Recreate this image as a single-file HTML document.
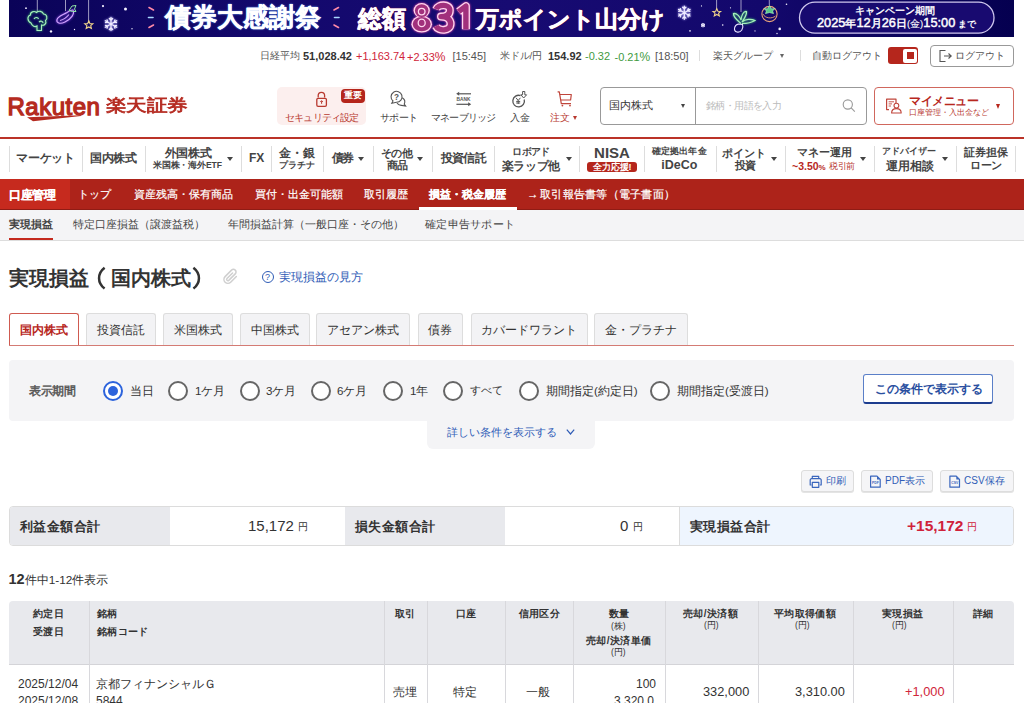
<!DOCTYPE html>
<html lang="ja"><head><meta charset="utf-8">
<style>
*{box-sizing:border-box;margin:0;padding:0}
html,body{width:1024px;height:703px;overflow:hidden;background:#fff}
body{position:relative;font-family:"Liberation Sans",sans-serif;color:#333}
.a{position:absolute}
.t{position:absolute;white-space:nowrap;line-height:1}
.b{font-weight:bold}
.g{color:#555}
.red{color:#d0263a}
.grn{color:#3f9b3f}
.blue{color:#2f5cb6}
.div{position:absolute;width:1px;background:#ddd}
.tri{position:absolute;width:0;height:0;border-left:2.75px solid transparent;border-right:2.75px solid transparent;border-top:4px solid #444}
</style></head><body>

<!-- ============ BANNER ============ -->
<div class="a" id="banner" style="left:9px;top:0;width:1005px;height:37px;background:linear-gradient(90deg,#0a0358 0%,#13086c 25%,#170b72 50%,#13086c 75%,#050050 100%);overflow:hidden">
<svg class="a" style="left:-9px;top:0" width="1024" height="37" viewBox="0 0 1024 37">
 <g stroke="#d8d4e8" stroke-width="0.8" opacity="0.9">
  <line x1="37.3" y1="0" x2="37.3" y2="12"/>
  <line x1="65.5" y1="0" x2="65.5" y2="11"/>
  <line x1="88.6" y1="0" x2="88.6" y2="21"/>
  <line x1="716.6" y1="0" x2="716.6" y2="9"/>
  <line x1="741" y1="0" x2="741" y2="12"/>
  <line x1="769.3" y1="0" x2="769.3" y2="5"/>
 </g>
 <!-- broccoli -->
 <g fill="none" stroke="#a6f0bb" stroke-width="1.1" style="filter:drop-shadow(0 0 1px #3fd070)">
  <path d="M31 23 C27 21 27 16 30.5 15 C30 12 34 10.5 36.5 12.5 C38.5 10.5 42.5 11 43.5 14 C47 14 48 18.5 45.5 20.5 C47 23.5 44 26 41.5 25 L41.5 30.5 L37 30.5 L37 26 C35 27.5 32 26 31 23 Z"/>
  <path d="M34 19 C35 17 38 17 38.5 19 M39 22 C40.5 20.5 43 21 43 23"/>
 </g>
 <!-- eggplant -->
 <g fill="none" stroke="#d2a6ff" stroke-width="1.1" style="filter:drop-shadow(0 0 1px #a050ff)">
  <path d="M73 10 C75 14 71 19 65 22 C60 24.5 56 23 57 19.5 C58 16 63 15 67 12.5 C69 11 71 9.5 73 10 Z"/>
  <path d="M60 20.5 C64 19.5 67 17 69 14.5"/>
 </g>
 <path d="M69 10.5 L72 6 L76 5.5 L74.5 9 L76 11.5 L72.5 11.5 Z" fill="none" stroke="#8fe3a6" stroke-width="1"/>
 <!-- stars -->
 <path d="M88.8 20.8 L90 23.6 L92.9 23.8 L90.7 25.7 L91.4 28.5 L88.8 27 L86.2 28.5 L86.9 25.7 L84.7 23.8 L87.6 23.6 Z" fill="none" stroke="#f2d58a" stroke-width="1.1"/>
 <path d="M716.8 8.6 L717.9 11.2 L720.7 11.4 L718.6 13.2 L719.3 15.9 L716.8 14.5 L714.3 15.9 L715 13.2 L712.9 11.4 L715.7 11.2 Z" fill="none" stroke="#f2d58a" stroke-width="1.1"/>
 <!-- snowflakes -->
 <path d="M111.00 24.00 L111.00 17.40 M111.00 20.17 L112.63 18.54 M111.00 20.17 L109.37 18.54 M111.00 24.00 L105.28 20.70 M107.68 22.09 L107.09 19.85 M107.68 22.09 L105.45 22.68 M111.00 24.00 L105.28 27.30 M107.68 25.91 L105.45 25.32 M107.68 25.91 L107.09 28.15 M111.00 24.00 L111.00 30.60 M111.00 27.83 L109.37 29.46 M111.00 27.83 L112.63 29.46 M111.00 24.00 L116.72 27.30 M114.32 25.91 L114.91 28.15 M114.32 25.91 L116.55 25.32 M111.00 24.00 L116.72 20.70 M114.32 22.09 L116.55 22.68 M114.32 22.09 L114.91 19.85 M684.30 12.70 L684.30 6.10 M684.30 8.87 L685.93 7.24 M684.30 8.87 L682.67 7.24 M684.30 12.70 L678.58 9.40 M680.98 10.79 L680.39 8.55 M680.98 10.79 L678.75 11.38 M684.30 12.70 L678.58 16.00 M680.98 14.61 L678.75 14.02 M680.98 14.61 L680.39 16.85 M684.30 12.70 L684.30 19.30 M684.30 16.53 L682.67 18.16 M684.30 16.53 L685.93 18.16 M684.30 12.70 L690.02 16.00 M687.62 14.61 L688.21 16.85 M687.62 14.61 L689.85 14.02 M684.30 12.70 L690.02 9.40 M687.62 10.79 L689.85 11.38 M687.62 10.79 L688.21 8.55" stroke="#eeeaff" stroke-width="1.3" stroke-linecap="round" fill="none" style="filter:drop-shadow(0 0 0.8px #b8b0ff)"/>
 <path d="M703.00 25.20 L703.00 23.00 M703.00 23.92 L703.54 23.38 M703.00 23.92 L702.46 23.38 M703.00 25.20 L701.09 24.10 M701.89 24.56 L701.70 23.82 M701.89 24.56 L701.15 24.76 M703.00 25.20 L701.09 26.30 M701.89 25.84 L701.15 25.64 M701.89 25.84 L701.70 26.58 M703.00 25.20 L703.00 27.40 M703.00 26.48 L702.46 27.02 M703.00 26.48 L703.54 27.02 M703.00 25.20 L704.91 26.30 M704.11 25.84 L704.30 26.58 M704.11 25.84 L704.85 25.64 M703.00 25.20 L704.91 24.10 M704.11 24.56 L704.85 24.76 M704.11 24.56 L704.30 23.82" stroke="#eeeaff" stroke-width="1" fill="none"/>
 <g fill="#f4f2ff">
  <circle cx="26" cy="8.2" r="0.9"/><circle cx="51" cy="31.4" r="1.2"/><circle cx="74.5" cy="29.5" r="0.7"/><circle cx="103" cy="6.1" r="1.1"/>
  <circle cx="125.5" cy="9.1" r="1.5"/><circle cx="132" cy="28.7" r="0.7"/>
  <circle cx="701.5" cy="5.9" r="0.6"/><circle cx="690" cy="30.9" r="0.8"/><circle cx="722.7" cy="25" r="0.8"/>
  <circle cx="730.5" cy="7.8" r="0.6"/><circle cx="755" cy="30.9" r="0.6"/><circle cx="779.7" cy="28.9" r="1.3"/><circle cx="786.5" cy="4.3" r="0.8"/>
  <circle cx="777" cy="33.5" r="0.7"/>
 </g>
 <!-- radish -->
 <g fill="none" stroke="#a6f0bb" stroke-width="1.2" style="filter:drop-shadow(0 0 1px #3fd070)">
  <path d="M741 23.5 C737 20 733 17 733.5 13.5 C737 13 740 17 741 20 C741.5 15 743.5 11 746.5 11.5 C747 15 744 19 742 22 C745 19 751 18.5 755 20.5 C751 23 746 23.5 742 23.5"/>
 </g>
 <path d="M738.5 24 C734 25 733 31 737 32 C741 33 744 28 742.5 24.5 Z" fill="none" stroke="#e6e2ff" stroke-width="1.1"/>
 <!-- tomato -->
 <circle cx="769.5" cy="14" r="7.6" fill="none" stroke="#e9a27a" stroke-width="1.1"/>
 <path d="M763 14 C765 18.5 772 19 775.5 16" fill="none" stroke="#e9a27a" stroke-width="0.9"/>
 <path d="M764 8.5 L767.5 9 L769.5 5.5 L771.5 9 L775 8.5 L772.5 11 L773.5 13.5 L769.5 12.5 L765.5 13.5 L766.5 11 Z" fill="#57c98a" stroke="#a6f0c0" stroke-width="0.7"/>
 <!-- dashes -->
 <g stroke-width="1.6" stroke-linecap="round">
  <line x1="149" y1="7.5" x2="153.5" y2="10" stroke="#ff8aa8"/>
  <line x1="148.5" y1="17.5" x2="153" y2="17.5" stroke="#a8d8ff"/>
  <line x1="149" y1="27.5" x2="153.5" y2="25" stroke="#ff8aa8"/>
  <line x1="338.5" y1="7.5" x2="334" y2="10" stroke="#ff8aa8"/>
  <line x1="339" y1="17.5" x2="334.5" y2="17.5" stroke="#a8d8ff"/>
  <line x1="338.5" y1="27.5" x2="334" y2="25" stroke="#ff8aa8"/>
 </g>
 <!-- pill -->
 <rect x="799.5" y="2.2" width="194.5" height="31" rx="15.5" fill="#180a70" stroke="#cfc8ee" stroke-width="1.3"/>
</svg>
<span class="t b" style="left:156px;top:4.5px;font-size:25.6px;letter-spacing:0.1px;color:#fff;-webkit-text-stroke:0.2px #fff;text-shadow:0 0 2px #7fb8ff,0 0 1px #4f8fff">債券大感謝祭</span>
<span class="t b" style="left:348.5px;top:7.5px;font-size:23.5px;color:#fff;-webkit-text-stroke:0.5px #fff;text-shadow:0 0 1.5px #a01a40,0 0 1px #c02050">総額</span>
<svg class="a" style="left:392px;top:0" width="90" height="37" viewBox="401 0 90 37">
 <g style="filter:drop-shadow(0 0 1.2px #ff4fb0)">
 <g fill="#ffd6ee">
  <ellipse cx="421.7" cy="10.4" rx="8.1" ry="7.3"/>
  <ellipse cx="421.7" cy="24.2" rx="10.3" ry="8.4"/>
 </g>
 <g fill="none" stroke="#ffd6ee" stroke-width="8" stroke-linejoin="round">
  <path d="M436.2 9.2 C438 4 449.8 3.8 449.8 10.2 C449.8 14.6 446.6 16.6 441 16.6 C447.2 16.6 450.6 19.4 450.6 24 C450.6 31.4 438.4 31.4 436 26.2"/>
  <path d="M458.6 11.6 L465.9 6.2 V29.3"/>
 </g>
 </g>
 <g fill="#a1307c">
  <ellipse cx="421.7" cy="10.6" rx="6.8" ry="6.4"/>
  <ellipse cx="421.7" cy="24.1" rx="9" ry="7.2"/>
 </g>
 <g fill="#a1307c" stroke="#ffd6ee" stroke-width="1.3">
  <circle cx="421.7" cy="11.6" r="3.3"/>
  <ellipse cx="421.7" cy="22.9" rx="3.5" ry="3.7"/>
 </g>
 <g fill="none" stroke="#a1307c" stroke-width="5.4" stroke-linejoin="round">
  <path d="M436.2 9.2 C438 4 449.8 3.8 449.8 10.2 C449.8 14.6 446.6 16.6 441 16.6 C447.2 16.6 450.6 19.4 450.6 24 C450.6 31.4 438.4 31.4 436 26.2"/>
  <path d="M458.6 11.6 L465.9 6.2 V29.3"/>
 </g>
</svg>
<span class="t b" style="left:466.5px;top:7.5px;font-size:23.4px;color:#fff;-webkit-text-stroke:0.5px #fff;text-shadow:0 0 1.5px #a01a40,0 0 1px #c02050">万ポイント山分け</span>
<span class="t" style="left:845.5px;top:6px;font-size:10px;color:#fff;-webkit-text-stroke:0.35px #fff">キャンペーン期間</span>
<span class="t" style="left:808px;top:16.8px;color:#fff;font-size:12.8px;-webkit-text-stroke:0.45px #fff">2025<span style="font-size:10.5px">年</span>12<span style="font-size:10.5px">月</span>26<span style="font-size:10.5px">日</span><span style="font-size:9.5px;-webkit-text-stroke:0.1px #fff">(金)</span>15:00<span style="font-size:8.5px;font-weight:bold;-webkit-text-stroke:0"> まで</span></span>
</div>

<!-- ============ UTILITY BAR ============ -->
<div id="util">
<span class="t g" style="left:259.5px;top:51px;font-size:10.2px">日経平均</span>
<span class="t b" style="left:303px;top:50.5px;font-size:11px">51,028.42</span>
<span class="t red" style="left:356px;top:50.5px;font-size:11px">+1,163.74</span>
<span class="t red" style="left:407px;top:50.5px;font-size:11px">+2.33<span style="font-size:12px">%</span></span>
<span class="t g" style="left:452.5px;top:50.5px;font-size:11px">[15:45]</span>
<span class="t g" style="left:499.5px;top:51px;font-size:9.8px">米ドル/円</span>
<span class="t b" style="left:548px;top:50.5px;font-size:11px">154.92</span>
<span class="t grn" style="left:585px;top:50.5px;font-size:11px">-0.32</span>
<span class="t grn" style="left:614.5px;top:50.5px;font-size:11px">-0.21<span style="font-size:12px">%</span></span>
<span class="t g" style="left:655px;top:50.5px;font-size:11px">[18:50]</span>
<div class="div" style="left:699px;top:50px;height:11px"></div>
<span class="t g" style="left:712.5px;top:51px;font-size:9.8px">楽天グループ</span>
<div class="tri" style="left:779.5px;top:54px;border-top-color:#666;border-left-width:2.25px;border-right-width:2.25px;border-top-width:4px"></div>
<div class="div" style="left:800px;top:50px;height:11px"></div>
<span class="t g" style="left:811.5px;top:51px;font-size:9.9px">自動ログアウト</span>
<div class="a" style="left:888px;top:47px;width:30px;height:17px;background:#b5261c;border-radius:3px"></div>
<div class="a" style="left:903px;top:48.5px;width:14px;height:14px;background:#fff;border-radius:2px"></div>
<div class="a" style="left:906.5px;top:52px;width:7px;height:7px;background:#b5261c"></div>
<div class="a" style="left:930px;top:45px;width:84px;height:22px;border:1px solid #999;border-radius:4px"></div>
<svg class="a" style="left:938px;top:49px" width="16" height="14" viewBox="0 0 16 14"><path d="M7.5 1.5 H2 V12.5 H7.5" fill="none" stroke="#555" stroke-width="1.1"/><path d="M6 7 H13 M10.5 4.5 L13.2 7 L10.5 9.5" fill="none" stroke="#555" stroke-width="1.1"/></svg>
<span class="t g" style="left:955px;top:51px;font-size:10px">ログアウト</span>
</div>

<!-- ============ HEADER ============ -->
<div id="header">
<span class="t" style="left:7.5px;top:94.5px;font-size:24px;color:#b52a20;letter-spacing:0.5px;-webkit-text-stroke:1.3px #b52a20">Rakuten</span>
<svg class="a" style="left:25px;top:114px" width="60" height="9"><path d="M2 3.2 L56 1.2 L56 1.9 L8 7.2 Z" fill="#b52a20"/></svg>
<span class="t" style="left:105.5px;top:97.3px;font-size:20.4px;color:#b52a20;-webkit-text-stroke:0.9px #b52a20;transform:scale(1.02,0.84);transform-origin:0 0">楽天証券</span>
<div class="a" style="left:277px;top:87px;width:89px;height:38px;background:#fcefee;border-radius:5px"></div>
<div class="a" style="left:341px;top:89px;width:24px;height:14.3px;background:#b5261c;border-radius:4px"></div>
<span class="t b" style="left:343.5px;top:91px;font-size:9.2px;color:#fff">重要</span>
<span class="t" style="left:285px;top:113px;font-size:10px;letter-spacing:-0.8px;color:#b8392f">セキュリティ設定</span>
<span class="t g" style="left:380px;top:113px;font-size:10px;letter-spacing:-0.6px;color:#444">サポート</span>
<span class="t g" style="left:431px;top:113px;font-size:10px;letter-spacing:-0.8px;color:#444">マネーブリッジ</span>
<span class="t g" style="left:510px;top:113px;font-size:9.5px;color:#444">入金</span>
<span class="t" style="left:550px;top:113px;font-size:9.5px;color:#b8392f">注文</span>
<div class="tri" style="left:572.5px;top:116px;border-top-color:#b8392f;border-left-width:2.5px;border-right-width:2.5px;border-top-width:4px"></div>
<!-- header icons -->
<svg class="a" style="left:310px;top:88px" width="24" height="22" viewBox="310 88 24 22">
 <path d="M318.2 97.5 V95.5 A3.2 3.2 0 0 1 324.6 95.5 V97.5" fill="none" stroke="#b8392f" stroke-width="1.3"/>
 <rect x="316.8" y="98.3" width="9.6" height="8" rx="1.3" fill="none" stroke="#b8392f" stroke-width="1.3"/>
 <path d="M321.6 103.8 V101.2 M320.4 102 L321.6 100.6 L322.8 102" fill="none" stroke="#b8392f" stroke-width="1"/>
</svg>
<svg class="a" style="left:385px;top:88px" width="95" height="22" viewBox="385 88 95 22">
 <g fill="none" stroke="#555" stroke-width="1.1">
  <path d="M393 101 A5.5 5.5 0 1 1 396.5 102.3 L391.8 103.2 Z"/>
  <path d="M402.3 97.8 A5 5 0 0 1 404.2 104.2 L405.6 106 L401.5 105.4 A5 5 0 0 1 397 103"/>
 </g>
 <text x="396.6" y="100.3" font-family="Liberation Sans" font-weight="bold" font-size="8.2" fill="#555" text-anchor="middle">?</text>
 <g fill="none" stroke="#555" stroke-width="1.2">
  <path d="M458 93.8 H471"/><path d="M456.4 104.3 H469.5"/>
 </g>
 <path d="M456.2 93.8 L459.2 91.8 V95.8 Z" fill="#555"/>
 <path d="M471.2 104.3 L468.2 102.3 V106.3 Z" fill="#555"/>
 <text x="463.5" y="101.3" font-family="Liberation Sans" font-weight="bold" font-size="4.8" fill="#555" text-anchor="middle">BANK</text>
</svg>
<svg class="a" style="left:505px;top:88px" width="75" height="22" viewBox="505 88 75 22">
 <path d="M520.5 95.6 A5.8 5.8 0 1 0 524.2 99.5" fill="none" stroke="#555" stroke-width="1.3"/>
 <path d="M516 97.8 L518.2 100.5 L520.4 97.8 M518.2 100.5 V104 M516.2 101.4 H520.2 M516.2 103 H520.2" fill="none" stroke="#555" stroke-width="1"/>
 <path d="M522.6 91.5 H524.8 V94.8 H526.6 L523.7 98 L520.8 94.8 H522.6 Z" fill="none" stroke="#555" stroke-width="1"/>
 <g fill="none" stroke="#c0453b" stroke-width="1.2" stroke-linejoin="round">
  <path d="M557.6 91.8 H559.3 L561.3 103.6 H571"/>
  <path d="M559.9 94.5 H571.3 L570.6 100 H561"/>
 </g>
 <circle cx="562.4" cy="105.6" r="0.9" fill="#c0453b"/><circle cx="570" cy="105.6" r="0.9" fill="#c0453b"/>
</svg>
<!-- search -->
<div class="a" style="left:600px;top:87px;width:267px;height:38px;border:1px solid #999;border-radius:4px"></div>
<div class="a" style="left:695px;top:88px;width:1px;height:36px;background:#999"></div>
<span class="t" style="left:608.5px;top:100px;font-size:11px">国内株式</span>
<div class="tri" style="left:681.3px;top:104px;border-top-color:#444;border-left-width:2.5px;border-right-width:2.5px;border-top-width:4px"></div>
<span class="t" style="left:706px;top:100.5px;font-size:10px;letter-spacing:-0.6px;color:#bbb">銘柄・用語を入力</span>
<svg class="a" style="left:835px;top:92px" width="75" height="28" viewBox="835 92 75 28">
 <circle cx="847.8" cy="104.5" r="4.6" fill="none" stroke="#999" stroke-width="1.1"/>
 <path d="M851.2 107.9 L854.8 111.6" stroke="#999" stroke-width="1.1"/>
 <path d="M889 109.6 H886.6 V99.2 H896 V103" fill="none" stroke="#c0453b" stroke-width="1.2" stroke-linejoin="round"/>
 <path d="M888.6 101.8 H894 M888.6 103.9 H892 M888.6 106 H891" stroke="#c0453b" stroke-width="0.9"/>
 <circle cx="896.4" cy="105.6" r="2.4" fill="none" stroke="#c0453b" stroke-width="1.1"/>
 <path d="M891.6 113 C891.6 110.4 893.6 108.6 896.4 108.6 C899.2 108.6 901.2 110.4 901.2 113 Z" fill="none" stroke="#c0453b" stroke-width="1.1" stroke-linejoin="round"/>
</svg>
<!-- my menu -->
<div class="a" style="left:873.5px;top:87px;width:140.5px;height:38px;border:1px solid #d0675d;border-radius:4px"></div>
<span class="t b" style="left:909px;top:94.5px;font-size:12px;letter-spacing:-0.4px;color:#b8281e">マイメニュー</span>
<span class="t" style="left:909px;top:109px;font-size:8px;color:#b8392f">口座管理・入出金など</span>
<div class="tri" style="left:996px;top:104px;border-top-color:#b8281e;border-left-width:2.75px;border-right-width:2.75px;border-top-width:5px"></div>
</div>

<!-- ============ NAV ============ -->
<div class="a" style="left:0;top:137px;width:1024px;height:1.5px;background:#bb3328"></div>
<div id="nav" style="color:#444">
<div class="div" style="left:9px;top:146px;height:26px"></div>
<div class="div" style="left:82px;top:146px;height:26px"></div>
<div class="div" style="left:145px;top:146px;height:26px"></div>
<div class="div" style="left:241px;top:146px;height:26px"></div>
<div class="div" style="left:271px;top:146px;height:26px"></div>
<div class="div" style="left:323px;top:146px;height:26px"></div>
<div class="div" style="left:373px;top:146px;height:26px"></div>
<div class="div" style="left:432px;top:146px;height:26px"></div>
<div class="div" style="left:494px;top:146px;height:26px"></div>
<div class="div" style="left:579px;top:146px;height:26px"></div>
<div class="div" style="left:644px;top:146px;height:26px"></div>
<div class="div" style="left:716px;top:146px;height:26px"></div>
<div class="div" style="left:785px;top:146px;height:26px"></div>
<div class="div" style="left:874px;top:146px;height:26px"></div>
<div class="div" style="left:956px;top:146px;height:26px"></div>
<div class="div" style="left:1015px;top:146px;height:26px"></div>
<span class="t b" style="left:16px;top:152px;font-size:12px;letter-spacing:-0.2px">マーケット</span>
<span class="t b" style="left:90px;top:152px;font-size:12px;letter-spacing:-0.35px">国内株式</span>
<span class="t b" style="left:128px;width:120px;text-align:center;top:147.0px;font-size:12px;letter-spacing:-0.35px">外国株式</span>
<span class="t b" style="left:127.4px;width:120px;text-align:center;top:161.0px;font-size:8.6px;letter-spacing:-0.15px">米国株・海外ETF</span>
<div class="tri" style="left:227.3px;top:156.8px;border-top-color:#444;border-left-width:3.0px;border-right-width:3.0px;border-top-width:4.5px"></div>
<span class="t b" style="left:249px;top:152px;font-size:12px">FX</span>
<span class="t b" style="left:237px;width:120px;text-align:center;top:147px;font-size:12px">金・銀</span>
<span class="t b" style="left:237.2px;width:120px;text-align:center;top:161px;font-size:9px">プラチナ</span>
<span class="t b" style="left:331.5px;top:152.0px;font-size:12px;letter-spacing:-1.2px">債券</span>
<div class="tri" style="left:358.3px;top:156.8px;border-top-color:#444;border-left-width:3.0px;border-right-width:3.0px;border-top-width:4.5px"></div>
<span class="t b" style="left:336.4px;width:120px;text-align:center;top:147.5px;font-size:11px;letter-spacing:-0.5px">その他</span>
<span class="t b" style="left:336.5px;width:120px;text-align:center;top:160.3px;font-size:11px;letter-spacing:-1px">商品</span>
<div class="tri" style="left:417.3px;top:156.8px;border-top-color:#444;border-left-width:3.0px;border-right-width:3.0px;border-top-width:4.5px"></div>
<span class="t b" style="left:440.5px;top:152.0px;font-size:12px;letter-spacing:-0.6px">投資信託</span>
<span class="t b" style="left:471px;width:120px;text-align:center;top:147.0px;font-size:9.5px;letter-spacing:-0.6px">ロボアド</span>
<span class="t b" style="left:470.79999999999995px;width:120px;text-align:center;top:160.0px;font-size:12px;letter-spacing:-0.4px">楽ラップ他</span>
<div class="tri" style="left:565.8px;top:156.8px;border-top-color:#444;border-left-width:3.0px;border-right-width:3.0px;border-top-width:4.5px"></div>
<span class="t b" style="left:552px;width:120px;text-align:center;top:145.0px;font-size:15px;letter-spacing:0px">NISA</span>
<div class="a" style="left:587px;top:162px;width:50px;height:10px;background:#b5261c;border-radius:3px"></div>
<span class="t b" style="left:552px;width:120px;text-align:center;top:162.5px;font-size:9px;color:#fff">全力応援!</span>
<span class="t b" style="left:619.3px;width:120px;text-align:center;top:147.0px;font-size:9px;letter-spacing:0.2px">確定拠出年金</span>
<span class="t b" style="left:619.3px;width:120px;text-align:center;top:159px;font-size:12.5px">iDeCo</span>
<span class="t b" style="left:684.2px;width:120px;text-align:center;top:147.5px;font-size:11px">ポイント</span>
<span class="t b" style="left:684.9px;width:120px;text-align:center;top:160.3px;font-size:11px;letter-spacing:-1.1px">投資</span>
<div class="tri" style="left:771.3px;top:156.8px;border-top-color:#444;border-left-width:3.0px;border-right-width:3.0px;border-top-width:4.5px"></div>
<span class="t b" style="left:764.5px;width:120px;text-align:center;top:147px;font-size:11px">マネー運用</span>
<span class="t b" style="left:792px;top:161px;font-size:10.5px;color:#b8281e">~3.50<span style="font-size:8px">%</span></span>
<span class="t" style="left:829px;top:162px;font-size:9px;letter-spacing:-0.4px;color:#b8392f">税引前</span>
<div class="tri" style="left:859.8px;top:156.8px;border-top-color:#444;border-left-width:3.0px;border-right-width:3.0px;border-top-width:4.5px"></div>
<span class="t b" style="left:849.1px;width:120px;text-align:center;top:147px;font-size:9.2px">アドバイザー</span>
<span class="t b" style="left:849.5px;width:120px;text-align:center;top:160px;font-size:12px">運用相談</span>
<div class="tri" style="left:942.3px;top:156.8px;border-top-color:#444;border-left-width:3.0px;border-right-width:3.0px;border-top-width:4.5px"></div>
<span class="t b" style="left:925.8px;width:120px;text-align:center;top:147.3px;font-size:11px;letter-spacing:0px">証券担保</span>
<span class="t b" style="left:925.8px;width:120px;text-align:center;top:160.3px;font-size:11px;letter-spacing:-0.5px">ローン</span>
</div>

<!-- ============ RED BAR ============ -->
<div class="a" style="left:0;top:179.4px;width:1024px;height:30.6px;background:#ad231a"></div>
<div class="a" style="left:0;top:179.4px;width:70px;height:30.6px;background:#c62a1e"></div>
<div class="a" style="left:0;top:209px;width:1024px;height:1px;background:#8f1c15"></div>
<div id="redbar" style="color:#fff;-webkit-text-stroke:0.2px #fff">
<span class="t b" style="left:9px;top:189px;font-size:12px;letter-spacing:-0.4px">口座管理</span>
<span class="t" style="left:77.5px;top:189px;font-size:11px">トップ</span>
<span class="t" style="left:134px;top:189px;font-size:11.4px">資産残高・保有商品</span>
<span class="t" style="left:255px;top:189px;font-size:11.4px">買付・出金可能額</span>
<span class="t" style="left:364px;top:189px;font-size:11.4px">取引履歴</span>
<span class="t b" style="left:429px;top:189px;font-size:11.4px">損益・税金履歴</span>
<div class="a" style="left:419px;top:207px;width:98px;height:3px;background:#fff"></div>
<span class="t" style="left:527px;top:189px;font-size:11.2px">→</span>
<span class="t" style="left:540px;top:189px;font-size:11px;letter-spacing:0.25px">取引報告書等（電子書面）</span>
</div>

<!-- ============ SUBTABS ============ -->
<div class="a" style="left:0;top:210px;width:1024px;height:31px;background:#f4f4f6;border-bottom:1px solid #ddd"></div>
<div id="subtabs" style="color:#444">
<span class="t b" style="left:9px;top:219px;font-size:11px">実現損益</span>
<div class="a" style="left:9px;top:238px;width:44px;height:2px;background:#c42a1e"></div>
<span class="t" style="left:73px;top:219px;font-size:10.65px">特定口座損益（譲渡益税）</span>
<span class="t" style="left:228px;top:219px;font-size:10.65px">年間損益計算（一般口座・その他）</span>
<span class="t" style="left:425px;top:219px;font-size:11px;letter-spacing:0.3px">確定申告サポート</span>
</div>

<!-- ============ TITLE ============ -->
<span class="t b" style="left:8.5px;top:267.5px;font-size:20.4px;color:#333">実現損益</span>
<svg class="a" style="left:90px;top:264px" width="120" height="28" viewBox="90 264 120 28"><path d="M104.6 267.8 C97.2 273.5 97.2 283 104.6 288.6" fill="none" stroke="#333" stroke-width="2.5"/><path d="M193.4 267.8 C200.8 273.5 200.8 283 193.4 288.6" fill="none" stroke="#333" stroke-width="2.5"/></svg>
<span class="t b" style="left:111px;top:267.5px;font-size:20.4px;color:#333">国内株式</span>

<svg class="a" style="left:221px;top:266px" width="19" height="21" viewBox="0 0 24 24"><path d="M19.4 12.05l-7.19 7.19a5 5 0 0 1-7.07-7.07l8.19-8.19a3.3 3.3 0 0 1 4.67 4.67l-8.2 8.19a1.6 1.6 0 0 1-2.26-2.26l7.07-7.06" fill="none" stroke="#cfcfcf" stroke-width="1.9" stroke-linecap="round"/></svg>
<span class="t blue" style="left:279px;top:271px;font-size:12px">実現損益の見方</span>
<div class="a" style="left:262px;top:271px;width:12px;height:12px;border:1px solid #2f5cb6;border-radius:50%"></div>
<span class="t blue" style="left:265px;top:273px;font-size:9px">?</span>

<!-- ============ TABS ============ -->
<div class="a" style="left:9px;top:345px;width:1005px;height:1px;background:#d47b74"></div>
<div id="tabs">
<div class="a" style="left:9px;top:313px;width:70px;height:32px;background:#fff;border:1px solid #cf5a50;border-bottom:none;border-radius:3px 3px 0 0"></div>
<span class="t b" style="left:20px;top:323.8px;font-size:12px;color:#b8281e">国内株式</span>
<div class="a" style="left:85.5px;top:313px;width:70px;height:32px;background:#f3f3f5;border:1px solid #ddd;border-bottom:none;border-radius:3px 3px 0 0"></div>
<span class="t" style="left:97px;top:323.8px;font-size:12px">投資信託</span>
<div class="a" style="left:162.5px;top:313px;width:70px;height:32px;background:#f3f3f5;border:1px solid #ddd;border-bottom:none;border-radius:3px 3px 0 0"></div>
<span class="t" style="left:174px;top:323.8px;font-size:12px">米国株式</span>
<div class="a" style="left:239.5px;top:313px;width:70px;height:32px;background:#f3f3f5;border:1px solid #ddd;border-bottom:none;border-radius:3px 3px 0 0"></div>
<span class="t" style="left:251px;top:323.8px;font-size:12px">中国株式</span>
<div class="a" style="left:316px;top:313px;width:94px;height:32px;background:#f3f3f5;border:1px solid #ddd;border-bottom:none;border-radius:3px 3px 0 0"></div>
<span class="t" style="left:327px;top:323.8px;font-size:12px">アセアン株式</span>
<div class="a" style="left:417.5px;top:313px;width:45px;height:32px;background:#f3f3f5;border:1px solid #ddd;border-bottom:none;border-radius:3px 3px 0 0"></div>
<span class="t" style="left:428px;top:323.8px;font-size:12px">債券</span>
<div class="a" style="left:470.5px;top:313px;width:117px;height:32px;background:#f3f3f5;border:1px solid #ddd;border-bottom:none;border-radius:3px 3px 0 0"></div>
<span class="t" style="left:481px;top:323.8px;font-size:12px">カバードワラント</span>
<div class="a" style="left:594px;top:313px;width:94px;height:32px;background:#f3f3f5;border:1px solid #ddd;border-bottom:none;border-radius:3px 3px 0 0"></div>
<span class="t" style="left:605px;top:323.8px;font-size:12px">金・プラチナ</span>
</div>

<!-- ============ FILTER ============ -->
<div class="a" style="left:9px;top:360px;width:1005px;height:61px;background:#f4f4f6;border-radius:4px"></div>
<div class="a" style="left:427px;top:415px;width:168px;height:34px;background:#f4f4f6;border-radius:0 0 6px 6px"></div>
<span class="t" style="left:29px;top:385px;font-size:12px;letter-spacing:-0.35px;color:#555;-webkit-text-stroke:0.45px #555">表示期間</span>
<div id="radios" style="color:#333">
<div class="a" style="left:102.5px;top:380.5px;width:20px;height:20px;border:2px solid #2c63dc;border-radius:50%;background:#fff"></div>
<div class="a" style="left:107.5px;top:385.5px;width:10px;height:10px;background:#2c63dc;border-radius:50%"></div>
<span class="t" style="left:130px;top:384.7px;font-size:11.6px">当日</span>
<div class="a" style="left:167.5px;top:380.5px;width:20px;height:20px;border:2px solid #666;border-radius:50%;background:#fff"></div>
<span class="t" style="left:195px;top:384.7px;font-size:11.6px">1ケ月</span>
<div class="a" style="left:240px;top:380.5px;width:20px;height:20px;border:2px solid #666;border-radius:50%;background:#fff"></div>
<span class="t" style="left:266px;top:384.7px;font-size:11.6px">3ケ月</span>
<div class="a" style="left:311px;top:380.5px;width:20px;height:20px;border:2px solid #666;border-radius:50%;background:#fff"></div>
<span class="t" style="left:337px;top:384.7px;font-size:11.6px">6ケ月</span>
<div class="a" style="left:382.5px;top:380.5px;width:20px;height:20px;border:2px solid #666;border-radius:50%;background:#fff"></div>
<span class="t" style="left:410px;top:384.7px;font-size:11.6px">1年</span>
<div class="a" style="left:442.5px;top:380.5px;width:20px;height:20px;border:2px solid #666;border-radius:50%;background:#fff"></div>
<span class="t" style="left:470px;top:385px;font-size:11.2px">すべて</span>
<div class="a" style="left:518.5px;top:380.5px;width:20px;height:20px;border:2px solid #666;border-radius:50%;background:#fff"></div>
<span class="t" style="left:546px;top:384.7px;font-size:11.6px">期間指定(約定日)</span>
<div class="a" style="left:649.5px;top:380.5px;width:20px;height:20px;border:2px solid #666;border-radius:50%;background:#fff"></div>
<span class="t" style="left:677px;top:384.7px;font-size:11.6px">期間指定(受渡日)</span>
</div>
<div class="a" style="left:863px;top:373.5px;width:130px;height:30.5px;background:#fff;border:1px solid #5a7fc8;border-bottom:2.5px solid #1c3c8e;border-radius:3px"></div>
<span class="t b" style="left:875px;top:383px;font-size:12px;color:#2a4fa0">この条件で表示する</span>
<span class="t blue" style="left:447px;top:427px;font-size:11px">詳しい条件を表示する</span>
<svg class="a" style="left:565px;top:428px" width="11" height="9" viewBox="0 0 11 9"><path d="M1.8 1.6 L5.5 6 L9.2 1.6" fill="none" stroke="#2f5cb6" stroke-width="1.2"/></svg>

<!-- ============ ACTIONS ============ -->
<div id="actions">
<div class="a" style="left:801px;top:470px;width:52.5px;height:22px;background:#f5f5f7;border:1px solid #ddd;border-radius:3px;box-shadow:0 1px 0 #e4e4e4"></div>
<span class="t blue" style="left:826px;top:476px;font-size:10px">印刷</span>
<div class="a" style="left:861px;top:470px;width:72px;height:22px;background:#f5f5f7;border:1px solid #ddd;border-radius:3px;box-shadow:0 1px 0 #e4e4e4"></div>
<span class="t blue" style="left:885px;top:476px;font-size:10px">PDF表示</span>
<div class="a" style="left:940px;top:470px;width:73.5px;height:22px;background:#f5f5f7;border:1px solid #ddd;border-radius:3px;box-shadow:0 1px 0 #e4e4e4"></div>
<span class="t blue" style="left:964px;top:476px;font-size:10px">CSV保存</span>
</div>

<svg class="a" style="left:805px;top:472px" width="210" height="19" viewBox="805 472 210 19">
 <g fill="none" stroke="#3a66bd" stroke-width="1.2" stroke-linejoin="round">
  <path d="M812.3 478.6 V476.3 H818.7 V478.6"/>
  <path d="M811.6 485 H810.2 V480 A1.3 1.3 0 0 1 811.5 478.7 H819.9 A1.3 1.3 0 0 1 821.2 480 V485 H819.8"/>
  <rect x="812.3" y="482.3" width="6.5" height="5"/>
  <path d="M870.6 476.2 H877 L880.2 479.4 V487.2 H870.6 Z"/>
  <path d="M949.9 476.2 H956.3 L959.5 479.4 V487.2 H949.9 Z"/>
 </g>
 <path d="M877 476.2 L880.2 479.4 H877 Z" fill="#3a66bd"/>
 <path d="M956.3 476.2 L959.5 479.4 H956.3 Z" fill="#3a66bd"/>
 <text x="875.4" y="484" font-family="Liberation Sans" font-weight="bold" font-size="3.4" fill="#3a66bd" text-anchor="middle">PDF</text>
 <text x="954.7" y="484" font-family="Liberation Sans" font-weight="bold" font-size="3.4" fill="#3a66bd" text-anchor="middle">CSV</text>
</svg>
<!-- ============ SUMMARY ============ -->
<div class="a" style="left:9px;top:506px;width:1005px;height:40px;border:1px solid #dcdcdc;border-radius:4px;overflow:hidden;background:#fff">
 <div class="a" style="left:0;top:0;width:160px;height:38px;background:#e8e9ed"></div>
 <div class="a" style="left:335px;top:0;width:160px;height:38px;background:#e8e9ed"></div>
 <div class="a" style="left:669px;top:0;width:336px;height:38px;background:#eef5fe;border-left:1px solid #dcdcdc"></div>
</div>
<span class="t b" style="left:19.5px;top:519.8px;font-size:13px;letter-spacing:0.6px">利益金額合計</span>
<span class="t" style="left:248px;top:518px;font-size:15px">15,172</span>
<span class="t" style="left:298px;top:522px;font-size:9.5px">円</span>
<span class="t b" style="left:354.5px;top:519.8px;font-size:13px;letter-spacing:0.6px">損失金額合計</span>
<span class="t" style="left:620px;top:518px;font-size:15px">0</span>
<span class="t" style="left:633px;top:522px;font-size:9.5px">円</span>
<span class="t b" style="left:689.5px;top:519.8px;font-size:13px;letter-spacing:0.6px">実現損益合計</span>
<span class="t b" style="left:907px;top:518px;font-size:15.5px;color:#d0213a">+15,172</span>
<span class="t" style="left:967px;top:522px;font-size:10px;color:#d0213a">円</span>

<!-- ============ COUNT ============ -->
<span class="t" style="left:8.5px;top:571.5px;font-size:11.8px"><b style="font-size:14.5px">12</b>件中1-12件表示</span>

<!-- ============ TABLE ============ -->
<div class="a" style="left:9px;top:601px;width:1005px;height:64px;background:#e8e9ed;border-radius:4px 4px 0 0;border-bottom:1px solid #d4d4d8"></div>
<div id="tcols">
<div class="div" style="left:89px;top:601px;height:102px;background:#d8d8dc"></div>
<div class="div" style="left:383.5px;top:601px;height:102px;background:#d8d8dc"></div>
<div class="div" style="left:427px;top:601px;height:102px;background:#d8d8dc"></div>
<div class="div" style="left:504.5px;top:601px;height:102px;background:#d8d8dc"></div>
<div class="div" style="left:572.5px;top:601px;height:102px;background:#d8d8dc"></div>
<div class="div" style="left:665px;top:601px;height:102px;background:#d8d8dc"></div>
<div class="div" style="left:757.5px;top:601px;height:102px;background:#d8d8dc"></div>
<div class="div" style="left:852.5px;top:601px;height:102px;background:#d8d8dc"></div>
<div class="div" style="left:952.5px;top:601px;height:102px;background:#d8d8dc"></div>
</div>
<div id="thead" style="color:#333">
<span class="t b" style="letter-spacing:0.35px;left:33px;top:609px;font-size:10px">約定日</span>
<span class="t b" style="letter-spacing:0.35px;left:33px;top:627px;font-size:10px">受渡日</span>
<span class="t b" style="letter-spacing:0.35px;left:97px;top:609px;font-size:10px">銘柄</span>
<span class="t b" style="letter-spacing:0.35px;left:97px;top:627px;font-size:10px">銘柄コード</span>
<span class="t b" style="letter-spacing:0.35px;left:395px;top:609px;font-size:10px">取引</span>
<span class="t b" style="letter-spacing:0.35px;left:456px;top:609px;font-size:10px">口座</span>
<span class="t b" style="letter-spacing:0.35px;left:518.5px;top:609px;font-size:10px">信用区分</span>
<span class="t b" style="letter-spacing:0.35px;left:609px;top:609px;font-size:10px">数量</span>
<span class="t" style="left:611px;top:622px;font-size:8.5px">(株)</span>
<span class="t b" style="letter-spacing:0.35px;left:586px;top:636px;font-size:10px">売却/決済単価</span>
<span class="t" style="left:611px;top:648px;font-size:8.5px">(円)</span>
<span class="t b" style="letter-spacing:0.35px;left:683px;top:609px;font-size:10px">売却/決済額</span>
<span class="t" style="left:704px;top:621px;font-size:8.5px">(円)</span>
<span class="t b" style="letter-spacing:0.35px;left:774px;top:609px;font-size:10px">平均取得価額</span>
<span class="t" style="left:795px;top:621px;font-size:8.5px">(円)</span>
<span class="t b" style="letter-spacing:0.35px;left:882px;top:609px;font-size:10px">実現損益</span>
<span class="t" style="left:892px;top:621px;font-size:8.5px">(円)</span>
<span class="t b" style="letter-spacing:0.35px;left:973px;top:609px;font-size:10px">詳細</span>
</div>
<div id="tbody" style="color:#333">
<span class="t" style="left:18px;top:678px;font-size:12px">2025/12/04</span>
<span class="t" style="left:18px;top:695px;font-size:12px">2025/12/08</span>
<span class="t" style="left:96px;top:678px;font-size:12px">京都フィナンシャルＧ</span>
<span class="t" style="left:96px;top:695px;font-size:12px">5844</span>
<span class="t" style="left:393px;top:686px;font-size:12px">売埋</span>
<span class="t" style="left:453px;top:686px;font-size:12px">特定</span>
<span class="t" style="left:526px;top:686px;font-size:12px">一般</span>
<span class="t" style="left:636px;top:678px;font-size:12px">100</span>
<span class="t" style="left:614px;top:695px;font-size:12px">3,320.0</span>
<span class="t" style="left:703px;top:686px;font-size:12.8px">332,000</span>
<span class="t" style="left:795px;top:686px;font-size:12.8px">3,310.00</span>
<span class="t red" style="left:905px;top:686px;font-size:12.8px">+1,000</span>
</div>

</body></html>
